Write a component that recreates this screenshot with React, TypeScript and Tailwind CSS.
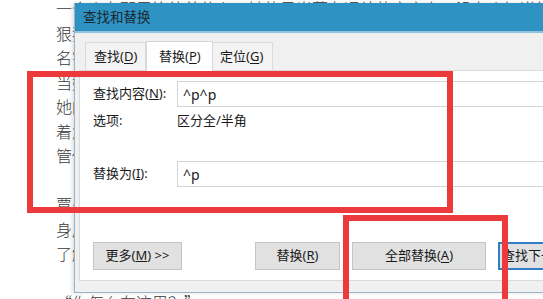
import React from "react";

const docLines = [
  "一个人在那里等待着什么，她的目光落在远处的窗户上，没有人知道她在想什么，只是静静地站着。",
  "狠狠地咬了一下嘴唇，她终于开口说话了。",
  "名字叫做什么已经不重要了。",
  "当她回过头来的时候，天色已经暗了下来。",
  "她的眼睛里闪着光。",
  "着急也没有用，事情总会过去的。",
  "管他呢，先走一步再说。",
  "",
  "覃先生站在门口，一动不动。",
  "身后传来了脚步声。",
  "了解这一切之后，她沉默了。",
  "",
  "“你怎么在这里？”",
];

function Mn({ pre, k, post = ")" }: { pre: string; k: string; post?: string }) {
  return (
    <span className="whitespace-nowrap">
      {pre}(<u className="underline-offset-2">{k}</u>{post}
    </span>
  );
}

export default function App() {
  return (
    <div className="relative w-[543px] h-[299px] overflow-hidden bg-white">
      {/* background document */}
      <div className="mt-[-4px] pl-[56px] font-['Noto_Sans_CJK_SC',serif] text-[16px] leading-[24.5px] text-[#3a3a3a] font-light whitespace-nowrap">
        {docLines.map((l, i) => (
          <div key={i} className="h-[24.5px]">
            {l}
          </div>
        ))}
      </div>

      {/* dialog */}
      <div className="absolute left-[74px] top-[3px] w-[520px] h-[290px] flex flex-col border-l border-b border-[#9bb3c8] shadow-[-2px_0_4px_rgba(0,0,0,0.12)] font-['Noto_Sans','Noto_Sans_CJK_SC',sans-serif] text-[13px] text-[#1a1a1a]">
        <div className="h-[30px] shrink-0 bg-[#2e93c2] flex items-center pl-[8px] text-[13.5px] text-[#1c2a33] border-b-2 border-[#8fc3de]">
          查找和替换
        </div>
        <div className="flex-1 flex flex-col bg-[#f0f0f0] pt-[7px]">
          {/* tabs */}
          <div className="h-[30px] shrink-0 flex items-end pl-[10px]">
            <div className="h-[28px] w-[61px] shrink-0 flex items-center pl-[8px] border border-b-0 border-[#dcdcdc] bg-[#f3f3f3]">
              <Mn pre="查找" k="D" />
            </div>
            <div className="h-[30px] w-[67px] shrink-0 flex items-center pl-[12px] border border-b-0 border-[#d6d6d6] bg-white -mb-px relative z-10">
              <Mn pre="替换" k="P" />
            </div>
            <div className="h-[28px] w-[60px] shrink-0 flex items-center pl-[7px] border border-b-0 border-l-0 border-[#dcdcdc] bg-[#f3f3f3]">
              <Mn pre="定位" k="G" />
            </div>
          </div>
          {/* panel */}
          <div className="h-[211px] shrink-0 ml-[4px] bg-white border border-[#dadada] flex flex-col pl-[13px] pt-[10px]">
            <div className="flex items-center h-[26px]">
              <div className="w-[84px] shrink-0">
                查找内容(<u>N</u>):
              </div>
              <div className="flex-1 h-[26px] border border-[#d4d4d4] flex items-center pl-[5px] text-[14px]">
                ^p^p
              </div>
            </div>
            <div className="flex items-center h-[20px] mt-[4px]">
              <div className="w-[84px] shrink-0">选项:</div>
              <div>区分全/半角</div>
            </div>
            <div className="flex items-center h-[26px] mt-[30px]">
              <div className="w-[84px] shrink-0">
                替换为(<u>I</u>):
              </div>
              <div className="flex-1 h-[26px] border border-[#d4d4d4] flex items-center pl-[5px] text-[14px]">
                ^p
              </div>
            </div>
            <div className="flex items-center mt-[55px] h-[28px]">
              <button className="shrink-0 w-[89px] h-[28px] bg-[#e1e1e1] border border-[#c4c4c4] flex items-center justify-center whitespace-nowrap">
                更多(<u>M</u>)&nbsp;&gt;&gt;
              </button>
              <button className="shrink-0 ml-[73px] w-[85px] h-[28px] bg-[#e1e1e1] border border-[#c4c4c4] flex items-center justify-center">
                <Mn pre="替换" k="R" />
              </button>
              <button className="shrink-0 ml-[12px] w-[134px] h-[28px] bg-[#e1e1e1] border border-[#c4c4c4] flex items-center justify-center">
                <Mn pre="全部替换" k="A" />
              </button>
              <button className="shrink-0 ml-[12px] w-[134px] h-[28px] bg-[#e1e1e1] border-2 border-[#2f7fc6] flex items-center pl-[2px]">
                <Mn pre="查找下一处" k="F" />
              </button>
            </div>
          </div>
        </div>
      </div>

      {/* red annotations */}
      <div className="absolute left-[27px] top-[71px] w-[426px] h-[142px] border-[6px] border-[#ec3a3c]" />
      <div className="absolute left-[343px] top-[215px] w-[165px] h-[110px] border-[6px] border-[#ec3a3c]" />
    </div>
  );
}
